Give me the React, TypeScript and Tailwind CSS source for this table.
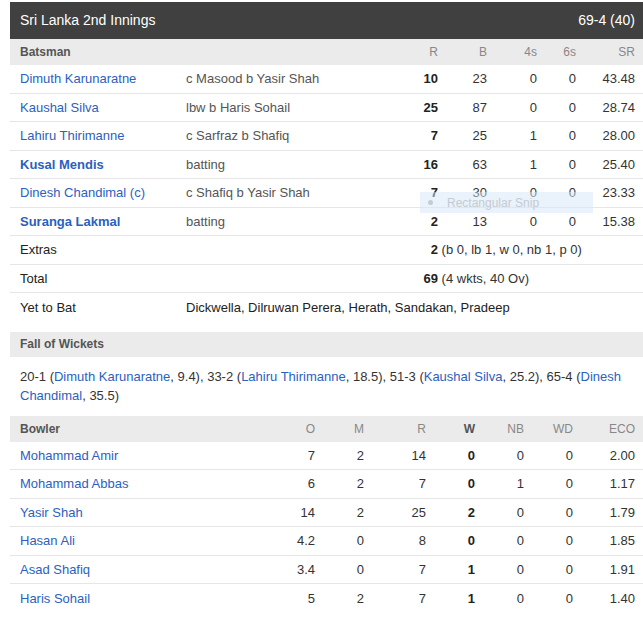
import React from "react";

const batsmen = [
  { name: "Dimuth Karunaratne", out: "c Masood b Yasir Shah", r: "10", b: "23", f: "0", s: "0", sr: "43.48" },
  { name: "Kaushal Silva", out: "lbw b Haris Sohail", r: "25", b: "87", f: "0", s: "0", sr: "28.74" },
  { name: "Lahiru Thirimanne", out: "c Sarfraz b Shafiq", r: "7", b: "25", f: "1", s: "0", sr: "28.00" },
  { name: "Kusal Mendis", out: "batting", r: "16", b: "63", f: "1", s: "0", sr: "25.40", notOut: true },
  { name: "Dinesh Chandimal (c)", out: "c Shafiq b Yasir Shah", r: "7", b: "30", f: "0", s: "0", sr: "23.33" },
  { name: "Suranga Lakmal", out: "batting", r: "2", b: "13", f: "0", s: "0", sr: "15.38", notOut: true },
];

const bowlers = [
  ["Mohammad Amir", "7", "2", "14", "0", "0", "0", "2.00"],
  ["Mohammad Abbas", "6", "2", "7", "0", "1", "0", "1.17"],
  ["Yasir Shah", "14", "2", "25", "2", "0", "0", "1.79"],
  ["Hasan Ali", "4.2", "0", "8", "0", "0", "0", "1.85"],
  ["Asad Shafiq", "3.4", "0", "7", "1", "0", "0", "1.91"],
  ["Haris Sohail", "5", "2", "7", "1", "0", "0", "1.40"],
];

const batGrid = "grid grid-cols-[166px_220px_50px_49px_50px_39px_59px] items-center";
const bowlGrid = "grid grid-cols-[264px_49px_49px_62px_49px_49px_49px_62px] items-center";
const row = "h-[28.5px] border-b border-[#e6e6e6]";
const link = "text-[#2c5fc0]";

const App = () => {
  return (
    <div className="relative min-h-[619px] bg-white pt-[2px] text-[13px] text-[#333] [font-family:'Liberation_Sans',Arial,sans-serif]">
      <div className="ml-[10px] w-[633px]">
        <div className="flex h-[37px] items-center justify-between bg-[#404040] px-[10px] pr-2 text-[14px] text-white">
          <span>Sri Lanka 2nd Innings</span>
          <span>69-4 (40)</span>
        </div>

        <div className={`${batGrid} h-[26px] bg-[#ebebeb] text-[12px] text-[#888]`}>
          <span className="pl-[10px] font-bold text-[#555]">Batsman</span>
          <span />
          <span className="pr-2 text-right">R</span>
          <span className="pr-2 text-right">B</span>
          <span className="pr-2 text-right">4s</span>
          <span className="pr-2 text-right">6s</span>
          <span className="pr-2 text-right">SR</span>
        </div>

        {batsmen.map((b) => (
          <div key={b.name} className={`${batGrid} ${row}`}>
            <span className={`pl-[10px] ${link} ${b.notOut ? "font-bold" : ""}`}>{b.name}</span>
            <span className="pl-[10px] text-[#555]">{b.out}</span>
            <span className="pr-2 text-right font-bold text-[#222]">{b.r}</span>
            <span className="pr-2 text-right">{b.b}</span>
            <span className="pr-2 text-right">{b.f}</span>
            <span className="pr-2 text-right">{b.s}</span>
            <span className="pr-2 text-right">{b.sr}</span>
          </div>
        ))}

        <div className={`${batGrid} ${row}`}>
          <span className="pl-[10px] text-[#222]">Extras</span>
          <span />
          <span className="col-span-5 whitespace-nowrap">
            <span className="inline-block w-[42px] text-right font-bold text-[#222]">2</span> (b 0, lb 1, w 0, nb 1, p 0)
          </span>
        </div>
        <div className={`${batGrid} ${row}`}>
          <span className="pl-[10px] text-[#222]">Total</span>
          <span />
          <span className="col-span-5 whitespace-nowrap">
            <span className="inline-block w-[42px] text-right font-bold text-[#222]">69</span> (4 wkts, 40 Ov)
          </span>
        </div>
        <div className={`${batGrid} h-[28.5px]`}>
          <span className="pl-[10px] text-[#222]">Yet to Bat</span>
          <span className="col-span-6 whitespace-nowrap pl-[10px] text-[#222]">
            Dickwella, Dilruwan Perera, Herath, Sandakan, Pradeep
          </span>
        </div>

        <div className="mt-[10px] flex h-[25px] items-center bg-[#ebebeb] pl-[10px] text-[12px] font-bold text-[#555]">
          Fall of Wickets
        </div>
        <p className="px-[10px] pr-2 pb-[11px] pt-[10px] leading-[19px]">
          {"20-1 ("}<span className={link}>Dimuth Karunaratne</span>{", 9.4), 33-2 ("}
          <span className={link}>Lahiru Thirimanne</span>{", 18.5), 51-3 ("}
          <span className={link}>Kaushal Silva</span>{", 25.2), 65-4 ("}
          <span className={link}>Dinesh Chandimal</span>{", 35.5)"}
        </p>

        <div className={`${bowlGrid} h-[26px] bg-[#ebebeb] text-[12px] text-[#888]`}>
          <span className="pl-[10px] font-bold text-[#555]">Bowler</span>
          <span className="pr-2 text-right">O</span>
          <span className="pr-2 text-right">M</span>
          <span className="pr-2 text-right">R</span>
          <span className="pr-2 text-right font-bold text-[#555]">W</span>
          <span className="pr-2 text-right">NB</span>
          <span className="pr-2 text-right">WD</span>
          <span className="pr-2 text-right">ECO</span>
        </div>
        {bowlers.map(([name, o, m, r, w, nb, wd, eco], i) => (
          <div key={name} className={`${bowlGrid} h-[28.5px] ${i < bowlers.length - 1 ? "border-b border-[#e6e6e6]" : ""}`}>
            <span className={`pl-[10px] ${link}`}>{name}</span>
            <span className="pr-2 text-right">{o}</span>
            <span className="pr-2 text-right">{m}</span>
            <span className="pr-2 text-right">{r}</span>
            <span className="pr-2 text-right font-bold text-[#222]">{w}</span>
            <span className="pr-2 text-right">{nb}</span>
            <span className="pr-2 text-right">{wd}</span>
            <span className="pr-2 text-right">{eco}</span>
          </div>
        ))}
      </div>

      <div className="absolute left-[420px] top-[192px] flex h-[21px] w-[173px] items-center gap-[14px] bg-[#d6e6f7]/50 pl-[8px] text-[12px] text-[#c3cbd4]">
        <span className="h-[5px] w-[5px] rounded-full bg-[#c3cbd4]" />
        <span>Rectangular Snip</span>
      </div>
    </div>
  );
};

export default App;
